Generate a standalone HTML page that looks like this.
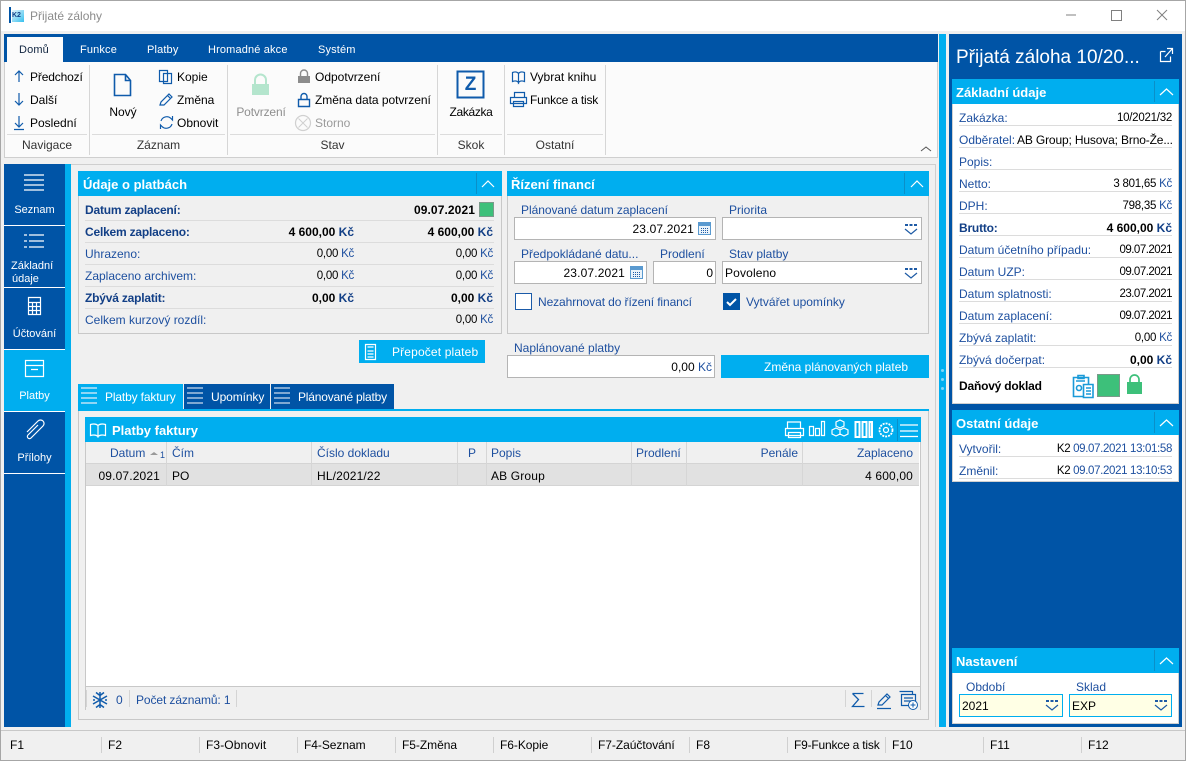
<!DOCTYPE html>
<html lang="cs"><head><meta charset="utf-8"><title>Přijaté zálohy</title>
<style>
html,body{margin:0;padding:0}
body{width:1186px;height:761px;overflow:hidden;position:relative;background:#f0f0f0;font:12px/16px "Liberation Sans",sans-serif;color:#000}
.b{position:absolute;box-sizing:border-box}
.t{position:absolute;white-space:nowrap;height:16px;line-height:16px}
.r{text-align:right}
.c{text-align:center}
.l{color:#1d4f9f}
.n{color:#123f86;font-weight:bold;letter-spacing:-.2px}
.v{font-weight:bold}
.k{color:#1d4f9f}
.w{color:#fff}
.g{color:#333}
.s{font-size:11.5px;letter-spacing:-.25px}
.d{font-size:11.5px;letter-spacing:-.5px}
.nav{font-size:11px}
.f{letter-spacing:-.15px}
.h{position:absolute;box-sizing:border-box;background:#00aeef;color:#fff;font-weight:bold;font-size:13px;line-height:28px;height:25px;padding-left:7px}
.sep{position:absolute;height:1px;background:#dcdcdc}
.inp{position:absolute;box-sizing:border-box;background:#fff;border:1px solid #b4b4b4;height:23px}
svg{position:absolute;overflow:visible}
.ic{fill:none;stroke:#0f5bab;stroke-width:1.2}
.wh{fill:none;stroke:#fff;stroke-width:1.2}
</style></head><body>
<div class="b" style="left:0;top:0;width:1186px;height:761px;border:1px solid #a6a6a6;z-index:9;pointer-events:none"></div>
<div class="b" style="left:1px;top:1px;width:1184px;height:30px;background:#fff"></div>
<div class="b" style="left:9px;top:7px;width:2px;height:16px;background:#0054a6"></div>
<div class="b" style="left:12px;top:10px;width:12px;height:12px;background:linear-gradient(135deg,#e8f4fb,#35c0ee)"></div>
<div class="t" style="left:12px;top:8px;font-size:7px;font-weight:bold;color:#123f86">K2</div>
<div class="t" style="left:30px;top:8px;color:#8c8c8c">Přijaté zálohy</div>
<svg style="left:0;top:0" width="1186" height="31"><path d="M1066 15h10" stroke="#808080"/><rect x="1111.500" y="10.500" width="10" height="10" fill="none" stroke="#808080"/><path d="M1157 10l10 10M1167 10l-10 10" stroke="#808080"/></svg>

<!-- ribbon -->
<div class="b" style="left:4px;top:34px;width:934px;height:28px;background:#0054a6"></div>
<div class="b" style="left:4px;top:62px;width:934px;height:96px;background:#fbfbfb;border:1px solid #cfcfcf;border-top:0"></div>
<div class="b" style="left:7px;top:37px;width:56px;height:25px;background:#fbfbfb"></div>
<div class="t" style="left:19px;top:42px;font-size:11px;letter-spacing:.15px;color:#10243f">Domů</div>
<div class="t w" style="left:80px;top:42px;font-size:11px;letter-spacing:.15px">Funkce</div>
<div class="t w" style="left:147px;top:42px;font-size:11px;letter-spacing:.15px">Platby</div>
<div class="t w" style="left:208px;top:42px;font-size:11px;letter-spacing:.15px">Hromadné akce</div>
<div class="t w" style="left:318px;top:42px;font-size:11px;letter-spacing:.15px">Systém</div>

<div class="b" style="left:89px;top:65px;width:1px;height:90px;background:#d6d6d6"></div>
<div class="b" style="left:227px;top:65px;width:1px;height:90px;background:#d6d6d6"></div>
<div class="b" style="left:437px;top:65px;width:1px;height:90px;background:#d6d6d6"></div>
<div class="b" style="left:504px;top:65px;width:1px;height:90px;background:#d6d6d6"></div>
<div class="b" style="left:605px;top:65px;width:1px;height:90px;background:#d6d6d6"></div>
<div class="sep" style="left:7px;top:134px;width:80px"></div>
<div class="sep" style="left:92px;top:134px;width:133px"></div>
<div class="sep" style="left:230px;top:134px;width:205px"></div>
<div class="sep" style="left:440px;top:134px;width:62px"></div>
<div class="sep" style="left:507px;top:134px;width:96px"></div>
<div class="t c g" style="left:7px;top:137px;width:80px">Navigace</div>
<div class="t c g" style="left:92px;top:137px;width:133px">Záznam</div>
<div class="t c g" style="left:230px;top:137px;width:205px">Stav</div>
<div class="t c g" style="left:440px;top:137px;width:62px">Skok</div>
<div class="t c g" style="left:507px;top:137px;width:96px">Ostatní</div>
<svg style="left:0;top:0" width="940" height="160">
 <g class="ic">
 <path d="M19 82V71M15 75l4-4 4 4M19 93v12M15 101l4 4 4-4M19 116v11M15 123l4 4 4-4M14 129.500h10"/>
 <path d="M114.500 74.500h11l5 6v15h-16zM125.500 74.500v6h5" stroke-width="1.600"/>
 <path d="M159.500 70.500h8v11h-8zM163.500 73.500h8v10h-8z"/>
 <path d="M160 105l1-3 8-8 3 3-8 8zM167.500 95.500l3 3"/>
 <path d="M161 121a6 6 0 0 1 10-2.500l1.500 1.500v-4M172 124a6 6 0 0 1-10 2.500l-1.500-1.500v4"/>
 <path d="M298.500 99.500h11v7h-11zM301 99.500v-3a3 3 0 0 1 6 0v3" stroke-width="1.400"/>
 <path d="M512.500 72.500c3-1 5-.5 6 1v9c-1-1.500-3-2-6-1zM524.500 72.500c-3-1-5-.5-6 1v9c1-1.500 3-2 6-1z"/>
 <path d="M514.500 97v-4.500h10V97M510.500 97.500h16v6h-16zM513.500 101.500h10v5h-10z"/>
 </g>
 <path d="M255 84v-4a5.500 5.500 0 0 1 11 0v4" fill="none" stroke="#b4e5cd" stroke-width="2"/>
 <rect x="252" y="84" width="17" height="11" fill="#b4e5cd"/>
 <path d="M300.500 76v-2.500a3.500 3.500 0 0 1 7 0V76" fill="none" stroke="#8c8c8c" stroke-width="1.400"/>
 <rect x="298" y="76" width="12" height="7" fill="#8c8c8c"/>
 <circle cx="303" cy="123" r="7.500" fill="none" stroke="#d0d0d0" stroke-width="1.200"/>
 <path d="M298.500 118.500l9 9M307.500 118.500l-9 9" stroke="#d0d0d0"/>
 <rect x="457.500" y="71.500" width="26" height="26" fill="none" stroke="#0f5bab" stroke-width="2"/>
 <path d="M921 151l5-4 5 4" fill="none" stroke="#555"/>
</svg>
<div class="t f" style="left:30px;top:69px">Předchozí</div>
<div class="t" style="left:30px;top:92px">Další</div>
<div class="t" style="left:30px;top:115px">Poslední</div>
<div class="t c" style="left:103px;top:104px;width:40px">Nový</div>
<div class="t" style="left:177px;top:69px">Kopie</div>
<div class="t" style="left:177px;top:92px">Změna</div>
<div class="t" style="left:177px;top:115px">Obnovit</div>
<div class="t c f" style="left:231px;top:104px;width:60px;color:#8f8f8f">Potvrzení</div>
<div class="t" style="left:315px;top:69px">Odpotvrzení</div>
<div class="t" style="left:315px;top:92px;letter-spacing:-.05px">Změna data potvrzení</div>
<div class="t" style="left:315px;top:115px;color:#9a9a9a">Storno</div>
<div class="t" style="left:463px;top:77px;font-size:19px;font-weight:bold;color:#0f5bab;width:15px;text-align:center">Z</div>
<div class="t c" style="left:441px;top:104px;width:60px;letter-spacing:-.35px">Zakázka</div>
<div class="t" style="left:530px;top:69px">Vybrat knihu</div>
<div class="t" style="left:530px;top:92px;letter-spacing:-.2px">Funkce a tisk</div>

<!-- left nav -->
<div class="b" style="left:4px;top:164px;width:61px;height:563px;background:#0054a6"></div>
<div class="b" style="left:65px;top:164px;width:6px;height:563px;background:#00aeef"></div>
<div class="b" style="left:4px;top:225px;width:61px;height:1px;background:#fff"></div>
<div class="b" style="left:4px;top:287px;width:61px;height:1px;background:#fff"></div>
<div class="b" style="left:4px;top:349px;width:61px;height:1px;background:#fff"></div>
<div class="b" style="left:4px;top:350px;width:61px;height:61px;background:#00aeef"></div>
<div class="b" style="left:4px;top:411px;width:61px;height:1px;background:#fff"></div>
<div class="b" style="left:4px;top:473px;width:61px;height:1px;background:#fff"></div>
<svg style="left:0;top:160px" width="70" height="320"><g class="wh">
 <path d="M24 15h20M24 20h20M24 25h20M24 30h20" />
 <path d="M24 75h3M29 75h15M24 81h3M29 81h15M24 87h3M29 87h15"/>
 <path d="M28.500 137.500h12v17h-12zM28.500 142.500h12M28.500 146.500h12M28.500 150.500h12M32.500 142.500v12M36.500 142.500v12"/>
 <path d="M25.500 200.500h18v16h-18zM25.500 205.500h18M31 209.500h7"/>
 <path d="M29 275l11-11a3.500 3.500 0 0 1 5 5l-12 12a2 2 0 0 1-3-3l10-10" transform="translate(-2,-3)"/>
</g></svg>
<div class="t c w nav" style="left:4px;top:202px;width:61px">Seznam</div>
<div class="t w nav" style="left:11px;top:258px">Základní</div>
<div class="t w nav" style="left:12px;top:271px">údaje</div>
<div class="t c w nav" style="left:4px;top:326px;width:61px">Účtování</div>
<div class="t c w nav" style="left:4px;top:388px;width:61px">Platby</div>
<div class="t c w nav" style="left:4px;top:450px;width:61px">Přílohy</div>

<!-- content frame -->
<div class="b" style="left:71px;top:164px;width:865px;height:563px;border:1px solid #cfcfcf;border-left:0;border-bottom:0"></div>

<!-- Udaje o platbach -->
<div class="b" style="left:78px;top:196px;width:424px;height:138px;border:1px solid #c8c8c8;border-top:0"></div>
<div class="h" style="left:78px;top:171px;width:424px;padding-left:5px">Údaje o platbách</div>
<div class="b" style="left:476px;top:173px;width:1px;height:21px;background:#0a8fc8"></div>
<div class="sep" style="left:85px;top:220px;width:409px"></div>
<div class="sep" style="left:85px;top:242px;width:409px"></div>
<div class="sep" style="left:85px;top:264px;width:409px"></div>
<div class="sep" style="left:85px;top:286px;width:409px"></div>
<div class="sep" style="left:85px;top:308px;width:409px"></div>
<div class="t n" style="left:85px;top:202px">Datum zaplacení:</div>
<div class="t n" style="left:85px;top:224px">Celkem zaplaceno:</div>
<div class="t l" style="left:85px;top:246px">Uhrazeno:</div>
<div class="t l" style="left:85px;top:268px">Zaplaceno archivem:</div>
<div class="t n" style="left:85px;top:290px">Zbývá zaplatit:</div>
<div class="t l" style="left:85px;top:312px">Celkem kurzový rozdíl:</div>
<div class="t r v" style="left:375px;top:202px;width:100px;letter-spacing:.1px">09.07.2021</div>
<div class="b" style="left:479px;top:202px;width:15px;height:15px;background:#3dc07a;border:1px solid #7a9a8a"></div>
<div class="t r v" style="left:254px;top:224px;width:100px">4 600,00 <span style="color:#123f86">Kč</span></div>
<div class="t r v" style="left:393px;top:224px;width:100px">4 600,00 <span style="color:#123f86">Kč</span></div>
<div class="t r s" style="left:254px;top:246px;width:100px">0,00 <span class="k">Kč</span></div>
<div class="t r s" style="left:393px;top:246px;width:100px">0,00 <span class="k">Kč</span></div>
<div class="t r s" style="left:254px;top:268px;width:100px">0,00 <span class="k">Kč</span></div>
<div class="t r s" style="left:393px;top:268px;width:100px">0,00 <span class="k">Kč</span></div>
<div class="t r v" style="left:254px;top:290px;width:100px">0,00 <span style="color:#123f86">Kč</span></div>
<div class="t r v" style="left:393px;top:290px;width:100px">0,00 <span style="color:#123f86">Kč</span></div>
<div class="t r s" style="left:393px;top:312px;width:100px">0,00 <span class="k">Kč</span></div>

<!-- Rizeni financi -->
<div class="b" style="left:507px;top:196px;width:422px;height:138px;border:1px solid #c8c8c8;border-top:0"></div>
<div class="h" style="left:507px;top:171px;width:422px;padding-left:4px">Řízení financí</div>
<div class="b" style="left:904px;top:173px;width:1px;height:21px;background:#0a8fc8"></div>
<svg style="left:0;top:0" width="940" height="200"><path d="M482 187l6-6 6 6M911 187l6-6 6 6" class="wh"/></svg>
<div class="t l" style="left:521px;top:202px;letter-spacing:-.05px">Plánované datum zaplacení</div>
<div class="t l" style="left:729px;top:202px">Priorita</div>
<div class="inp" style="left:514px;top:217px;width:202px"></div>
<div class="inp" style="left:722px;top:217px;width:200px"></div>
<div class="t r" style="left:594px;top:221px;width:100px;letter-spacing:.15px">23.07.2021</div>
<div class="t l" style="left:521px;top:246px">Předpokládané datu...</div>
<div class="t l" style="left:660px;top:246px">Prodlení</div>
<div class="t l" style="left:729px;top:246px">Stav platby</div>
<div class="inp" style="left:514px;top:261px;width:133px"></div>
<div class="inp" style="left:653px;top:261px;width:63px"></div>
<div class="inp" style="left:722px;top:261px;width:200px"></div>
<div class="t r" style="left:525px;top:265px;width:100px;letter-spacing:.15px">23.07.2021</div>
<div class="t r" style="left:613px;top:265px;width:100px">0</div>
<div class="t" style="left:725px;top:265px;letter-spacing:.15px">Povoleno</div>
<div class="b" style="left:515px;top:293px;width:17px;height:17px;background:#fff;border:1px solid #1a5aa8"></div>
<div class="t l" style="left:538px;top:294px;letter-spacing:-.1px">Nezahrnovat do řízení financí</div>
<div class="b" style="left:723px;top:293px;width:17px;height:17px;background:#0054a6"></div>
<div class="t l" style="left:746px;top:294px">Vytvářet upomínky</div>
<svg style="left:0;top:0" width="940" height="320">
 <g fill="#eaf3fa" stroke="#5a9ad0">
  <rect x="698.500" y="222.500" width="12" height="12"/><rect x="630.500" y="266.500" width="12" height="12"/>
 </g>
 <path d="M698 223h13v3h-13zM630 267h13v3h-13z" fill="#5a9ad0"/>
 <g fill="none" stroke="#1d5aa5" stroke-dasharray="1 1">
  <path d="M701 228.500h7M701 230.500h7M701 232.500h7M633 272.500h7M633 274.500h7M633 276.500h7"/>
 </g>
 <g fill="none" stroke="#1d5aa5">
  <path d="M905 225h12M905 269h12" stroke-width="2" stroke-dasharray="3 1.500"/>
  <path d="M905 229l6 5 6-5M905 273l6 5 6-5" stroke-width="1.200"/>
 </g>
 <path d="M727 302l3 3 6-6" fill="none" stroke="#fff" stroke-width="2"/>
</svg>

<!-- buttons -->
<div class="b" style="left:359px;top:340px;width:126px;height:23px;background:#00aeef"></div>
<div class="t w" style="left:392px;top:344px;letter-spacing:.15px">Přepočet plateb</div>
<svg style="left:0;top:0" width="940" height="380"><path class="wh" d="M365.500 344.500h10v15h-10zM367.500 347h6M367.500 351h6M367.500 354h6M367.500 357h6"/>
 <path class="wh" d="M726 372l1-4 9-9 3 3-9 9zM734 361l3 3"/></svg>
<div class="t l" style="left:514px;top:340px">Naplánované platby</div>
<div class="inp" style="left:507px;top:355px;width:208px"></div>
<div class="t r" style="left:612px;top:359px;width:100px">0,00 <span class="k">Kč</span></div>
<div class="b" style="left:721px;top:355px;width:208px;height:23px;background:#00aeef"></div>
<div class="t w" style="left:764px;top:359px">Změna plánovaných plateb</div>

<!-- tabs -->
<div class="b" style="left:78px;top:384px;width:105px;height:25px;background:#00aeef"></div>
<div class="b" style="left:184px;top:384px;width:86px;height:25px;background:#0054a6"></div>
<div class="b" style="left:271px;top:384px;width:123px;height:25px;background:#0054a6"></div>
<svg style="left:0;top:0" width="400" height="410"><g stroke="#8fd6f5" stroke-width="2"><path d="M81 388h16M81 393h16M81 398h16M81 403h16"/></g><g stroke="#7fa8d2" stroke-width="2"><path d="M187 388h16M187 393h16M187 398h16M187 403h16M274 388h16M274 393h16M274 398h16M274 403h16"/></g></svg>
<div class="t w" style="left:105px;top:389px;letter-spacing:-.15px">Platby faktury</div>
<div class="t w" style="left:211px;top:389px;letter-spacing:-.1px">Upomínky</div>
<div class="t w" style="left:298px;top:389px;letter-spacing:-.2px">Plánované platby</div>
<div class="b" style="left:78px;top:409px;width:851px;height:2px;background:#00aeef"></div>
<div class="b" style="left:78px;top:411px;width:851px;height:309px;border:1px solid #c8c8c8;border-top:0"></div>

<!-- grid -->
<div class="b" style="left:85px;top:417px;width:836px;height:25px;background:#00aeef"></div>
<div class="t w" style="left:112px;top:423px;font-weight:bold;font-size:13px">Platby faktury</div>
<div class="b" style="left:85px;top:442px;width:836px;height:268px;background:#fff;border:1px solid #c8c8c8;border-top:0"></div>
<div class="b" style="left:86px;top:442px;width:833px;height:22px;background:#f0f0f0;border-bottom:1px solid #d4d4d4"></div>
<div class="b" style="left:86px;top:464px;width:833px;height:22px;background:#e1e1e1;border-bottom:1px solid #d4d4d4"></div>
<div class="b" style="left:86px;top:686px;width:834px;height:24px;background:#f0f0f0;border-top:1px solid #c8c8c8"></div>
<div class="b" style="left:166px;top:442px;width:1px;height:44px;background:#d6d6d6"></div>
<div class="b" style="left:311px;top:442px;width:1px;height:44px;background:#d6d6d6"></div>
<div class="b" style="left:457px;top:442px;width:1px;height:44px;background:#d6d6d6"></div>
<div class="b" style="left:486px;top:442px;width:1px;height:44px;background:#d6d6d6"></div>
<div class="b" style="left:631px;top:442px;width:1px;height:44px;background:#d6d6d6"></div>
<div class="b" style="left:686px;top:442px;width:1px;height:44px;background:#d6d6d6"></div>
<div class="b" style="left:802px;top:442px;width:1px;height:44px;background:#d6d6d6"></div>
<div class="t l" style="left:110px;top:445px">Datum</div>
<svg style="left:0;top:0" width="170" height="460"><path d="M150 455l4-3 4 3z" fill="#999"/></svg>
<div class="t l" style="left:160px;top:447px;font-size:9px">1</div>
<div class="t l" style="left:172px;top:445px">Čím</div>
<div class="t l" style="left:317px;top:445px">Číslo dokladu</div>
<div class="t l" style="left:468px;top:445px">P</div>
<div class="t l" style="left:491px;top:445px">Popis</div>
<div class="t l" style="left:636px;top:445px">Prodlení</div>
<div class="t l r" style="left:698px;top:445px;width:100px">Penále</div>
<div class="t l r" style="left:813px;top:445px;width:100px">Zaplaceno</div>
<div class="t r" style="left:60px;top:468px;width:100px;letter-spacing:.15px">09.07.2021</div>
<div class="t" style="left:172px;top:468px">PO</div>
<div class="t" style="left:317px;top:468px;letter-spacing:.15px">HL/2021/22</div>
<div class="t" style="left:491px;top:468px;letter-spacing:.15px">AB Group</div>
<div class="t r" style="left:813px;top:468px;width:100px;letter-spacing:.15px">4 600,00</div>
<svg style="left:0;top:0" width="940" height="720">
 <g class="wh">
  <path d="M90.500 424.500c3.500-1 6-.5 7.500 1v11c-1.500-1.500-4-2-7.500-1zM105.500 424.500c-3.500-1-6-.5-7.500 1v11c1.500-1.500 4-2 7.500-1z"/>
  <path d="M787.500 428v-6h13v6M785.500 428.500h18v7h-18zM788.500 432.500h12v5h-12z"/>
  <path d="M809.500 426.500h4v9h-4zM815.500 428.500h4v7h-4zM821.500 421.500h3v14h-3z"/>
  <path d="M836 422l4 2v4l-4 2-4-2v-4zM832 430l4 2v4l-4 2-4-2v-4zM840 430l4 2v4l-4 2-4-2v-4z" transform="translate(4,-2)"/>
  <path d="M855.500 422h4v15h-4zM862.500 422h4v15h-4zM869.500 422h2.500v15h-2.500z" stroke-width="2"/>
  <circle cx="886" cy="430" r="6.500" stroke-dasharray="2 1" stroke-width="1.800"/><circle cx="886" cy="430" r="2.500"/>
  <path d="M900 425h18M900 431h18M900 436.500h18"/>
 </g>
 <path d="M897.500 419v22" stroke="#0a8fc8"/>
 <g class="ic">
  <path d="M100 692v16M93 696l14 8M107 696l-14 8M96 692.500l4 3 4-3M96 707.500l4-3 4 3M93 700h2M105 700h2" stroke-width="1.500"/>
  <path d="M852.500 693.500h11M852.500 693.500l6 6-6 7h12" stroke-width="1.300"/>
  <path d="M878 705l1-3 8-8 3 3-8 8zM885.500 695.500l3 3M877 708.500h14"/>
  <path d="M899.500 691.500h13v3M901.500 694.500h14v11h-14zM904 698h9M904 701h9"/>
 </g>
 <circle cx="913" cy="705" r="4.500" fill="#fff" stroke="#0f5bab"/><path d="M913 702.500v5M910.500 705h5" stroke="#0f5bab"/>
 <path d="M86.500 690v17M129.500 690v17M236.500 690v17M845.500 690v17M871.500 690v17" stroke="#d4d4d4"/>
</svg>
<div class="t l" style="left:116px;top:692px">0</div>
<div class="t l" style="left:136px;top:692px;letter-spacing:-.1px">Počet záznamů: 1</div>

<!-- splitter + right panel -->
<div class="b" style="left:939px;top:34px;width:7px;height:693px;background:#00aeef"></div>
<div class="b" style="left:941px;top:369px;width:3px;height:3px;background:#7fd6f7;border-radius:2px"></div>
<div class="b" style="left:941px;top:378px;width:3px;height:3px;background:#7fd6f7;border-radius:2px"></div>
<div class="b" style="left:941px;top:387px;width:3px;height:3px;background:#7fd6f7;border-radius:2px"></div>
<div class="b" style="left:949px;top:34px;width:233px;height:693px;background:#0054a6"></div>
<div class="t w" style="left:956px;top:46px;font-size:19px;height:24px;line-height:24px">Přijatá záloha 10/20...</div>
<div class="h" style="left:952px;top:79px;width:227px;padding-left:4px">Základní údaje</div>
<div class="b" style="left:952px;top:104px;width:227px;height:300px;background:#fff;border:1px solid #d0d0d0;border-top:0"></div>
<div class="h" style="left:952px;top:410px;width:227px;padding-left:4px">Ostatní údaje</div>
<div class="b" style="left:952px;top:435px;width:227px;height:47px;background:#fff;border:1px solid #d0d0d0;border-top:0"></div>
<div class="h" style="left:952px;top:648px;width:227px;padding-left:4px">Nastavení</div>
<div class="b" style="left:952px;top:673px;width:227px;height:51px;background:#fff;border:1px solid #d0d0d0;border-top:0"></div>
<div class="b" style="left:1154px;top:81px;width:1px;height:21px;background:#0a8fc8"></div>
<div class="b" style="left:1154px;top:412px;width:1px;height:21px;background:#0a8fc8"></div>
<div class="b" style="left:1154px;top:650px;width:1px;height:21px;background:#0a8fc8"></div>
<div class="sep" style="left:959px;top:125px;width:213px"></div>
<div class="sep" style="left:959px;top:147px;width:213px"></div>
<div class="sep" style="left:959px;top:169px;width:213px"></div>
<div class="sep" style="left:959px;top:191px;width:213px"></div>
<div class="sep" style="left:959px;top:213px;width:213px"></div>
<div class="sep" style="left:959px;top:235px;width:213px"></div>
<div class="sep" style="left:959px;top:257px;width:213px"></div>
<div class="sep" style="left:959px;top:279px;width:213px"></div>
<div class="sep" style="left:959px;top:301px;width:213px"></div>
<div class="sep" style="left:959px;top:323px;width:213px"></div>
<div class="sep" style="left:959px;top:345px;width:213px"></div>
<div class="sep" style="left:959px;top:367px;width:213px"></div>
<div class="sep" style="left:959px;top:456px;width:213px"></div>
<div class="sep" style="left:959px;top:478px;width:213px"></div>
<svg style="left:0;top:0" width="1186" height="761"><g class="wh">
 <path d="M1160.500 51.500h5M1160.500 51.500v10h10v-5M1165 57l7-8M1167 48.500h5.500v5.500"/>
 <path d="M1160 95l6.500-6 6.500 6M1160 426l6.500-6 6.500 6M1160 664l6.500-6 6.500 6"/>
</g>
 <g fill="none" stroke="#1a9ad8" stroke-width="1.600">
  <path d="M1073.500 377.500h15v19h-15zM1078 375.500h6v3h-6z"/>
  <path d="M1083.500 384.500h9.500v13h-9.500z" fill="#fff"/>
  <circle cx="1079" cy="388" r="2.500"/><path d="M1076 381h9M1086 388h5M1086 391h5M1086 394h5"/>
 </g>
 <path d="M1130 382v-2.500a4.500 4.500 0 0 1 9 0V382" fill="none" stroke="#3dc07a" stroke-width="1.700"/>
 <rect x="1127" y="382" width="15" height="12" fill="#3dc07a"/>
</svg>
<div class="t l" style="left:959px;top:110px">Zakázka:</div><div class="t r s" style="left:1052px;top:110px;width:120px">10/2021/32</div>
<div class="t l" style="left:959px;top:132px">Odběratel:</div><div class="t" style="left:1017px;top:132px;letter-spacing:-.15px">AB Group; Husova; Brno-Že...</div>
<div class="t l" style="left:959px;top:154px">Popis:</div>
<div class="t l" style="left:959px;top:176px">Netto:</div><div class="t r s" style="left:1052px;top:176px;width:120px">3 801,65 <span class="k">Kč</span></div>
<div class="t l" style="left:959px;top:198px">DPH:</div><div class="t r s" style="left:1052px;top:198px;width:120px">798,35 <span class="k">Kč</span></div>
<div class="t n" style="left:959px;top:220px">Brutto:</div><div class="t r v" style="left:1052px;top:220px;width:120px">4 600,00 <span style="color:#123f86">Kč</span></div>
<div class="t l" style="left:959px;top:242px">Datum účetního případu:</div><div class="t r d" style="left:1052px;top:242px;width:120px">09.07.2021</div>
<div class="t l" style="left:959px;top:264px">Datum UZP:</div><div class="t r d" style="left:1052px;top:264px;width:120px">09.07.2021</div>
<div class="t l" style="left:959px;top:286px">Datum splatnosti:</div><div class="t r d" style="left:1052px;top:286px;width:120px">23.07.2021</div>
<div class="t l" style="left:959px;top:308px">Datum zaplacení:</div><div class="t r d" style="left:1052px;top:308px;width:120px">09.07.2021</div>
<div class="t l" style="left:959px;top:330px">Zbývá zaplatit:</div><div class="t r s" style="left:1052px;top:330px;width:120px">0,00 <span class="k">Kč</span></div>
<div class="t l" style="left:959px;top:352px">Zbývá dočerpat:</div><div class="t r v" style="left:1052px;top:352px;width:120px">0,00 <span style="color:#123f86">Kč</span></div>
<div class="t v" style="left:959px;top:378px;letter-spacing:-.2px">Daňový doklad</div>
<div class="b" style="left:1097px;top:374px;width:23px;height:23px;background:#3dc07a;border:1px solid #7a9a8a"></div>
<div class="t l" style="left:959px;top:441px">Vytvořil:</div><div class="t r s" style="left:1012px;top:441px;width:160px;letter-spacing:-.35px">K2 <span class="k">09.07.2021 13:01:58</span></div>
<div class="t l" style="left:959px;top:463px">Změnil:</div><div class="t r s" style="left:1012px;top:463px;width:160px;letter-spacing:-.35px">K2 <span class="k">09.07.2021 13:10:53</span></div>
<div class="t l" style="left:966px;top:679px">Období</div>
<div class="t l" style="left:1076px;top:679px">Sklad</div>
<div class="inp" style="left:959px;top:694px;width:104px;background:#ffffe5;border-color:#00aeef"></div>
<div class="inp" style="left:1069px;top:694px;width:103px;background:#ffffe5;border-color:#00aeef"></div>
<div class="t" style="left:962px;top:698px">2021</div>
<div class="t" style="left:1072px;top:698px">EXP</div>
<svg style="left:0;top:0" width="1186" height="761"><g fill="none" stroke="#1d5aa5">
 <path d="M1046 701h12M1155 701h12" stroke-width="2" stroke-dasharray="3 1.500"/>
 <path d="M1046 705l6 5 6-5M1155 705l6 5 6-5" stroke-width="1.200"/>
</g></svg>

<!-- footer -->
<div class="b" style="left:1px;top:730px;width:1184px;height:1px;background:#c8c8c8"></div>
<svg style="left:0;top:0" width="1186" height="761"><path d="M101.500 737v16M199.500 737v16M297.500 737v16M395.500 737v16M493.500 737v16M591.500 737v16M689.500 737v16M787.500 737v16M885.500 737v16M983.500 737v16M1081.500 737v16" stroke="#d0d0d0"/></svg>
<div class="t" style="left:10px;top:737px">F1</div>
<div class="t" style="left:108px;top:737px">F2</div>
<div class="t" style="left:206px;top:737px;letter-spacing:.1px">F3-Obnovit</div>
<div class="t" style="left:304px;top:737px;letter-spacing:-.05px">F4-Seznam</div>
<div class="t" style="left:402px;top:737px;letter-spacing:-.05px">F5-Změna</div>
<div class="t" style="left:500px;top:737px;letter-spacing:-.05px">F6-Kopie</div>
<div class="t" style="left:598px;top:737px;letter-spacing:-.05px">F7-Zaúčtování</div>
<div class="t" style="left:696px;top:737px">F8</div>
<div class="t" style="left:794px;top:737px;letter-spacing:-.2px">F9-Funkce a tisk</div>
<div class="t" style="left:892px;top:737px">F10</div>
<div class="t" style="left:990px;top:737px">F11</div>
<div class="t" style="left:1088px;top:737px">F12</div>
</body></html>
